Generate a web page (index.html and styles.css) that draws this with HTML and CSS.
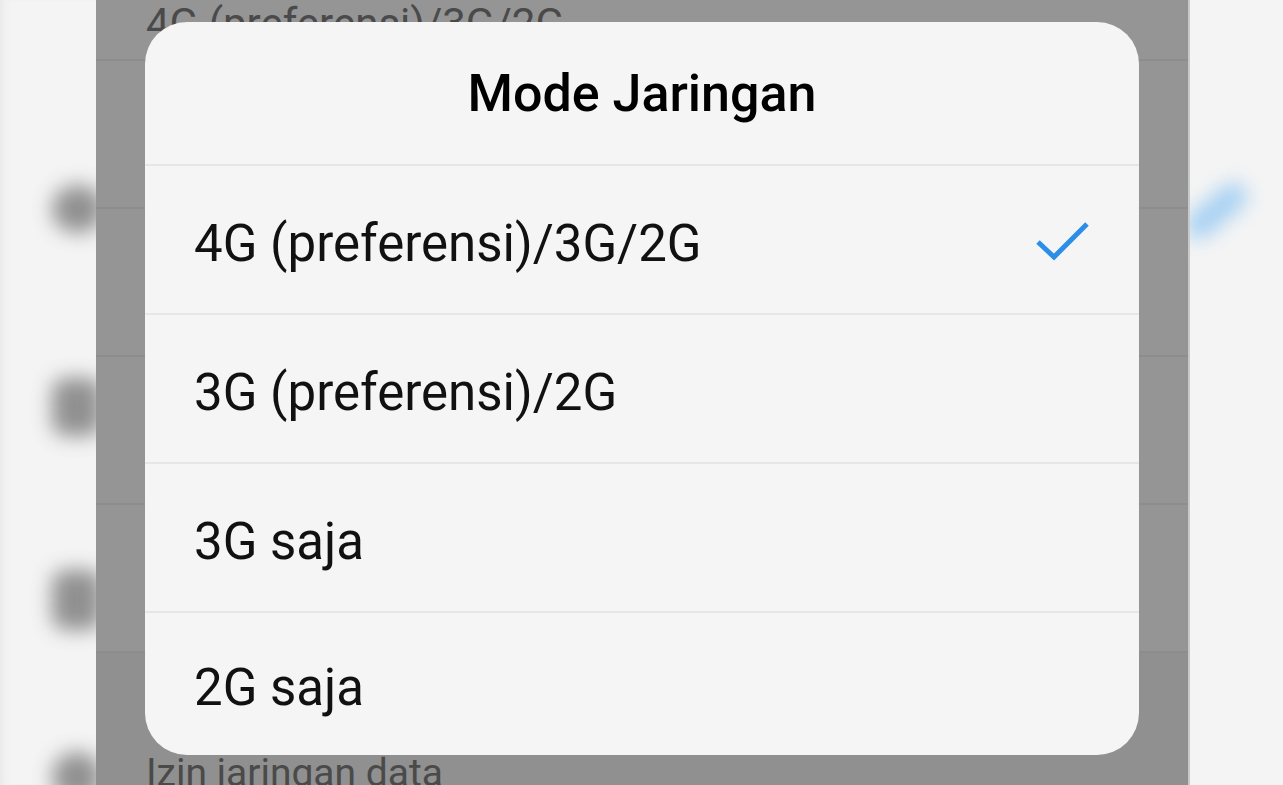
FILE: index.html
```html
<!DOCTYPE html>
<html lang="id">
<head>
<meta charset="utf-8">
<title>Mode Jaringan</title>
<link rel="stylesheet" href="styles.css">
</head>
<body>
<div class="screen">
  <div class="side side-left">
    <span class="blob blob-1"></span>
    <span class="blob blob-2"></span>
    <span class="blob blob-3"></span>
    <span class="blob blob-4"></span>
  </div>
  <div class="middle">
    <div class="bg-row bg-row-top"><span class="bg-text">4G (preferensi)/3G/2G</span></div>
    <div class="bg-row"></div>
    <div class="bg-row"></div>
    <div class="bg-row"></div>
    <div class="bg-row"></div>
    <div class="bg-row bg-row-last"><span class="bg-text bg-text-bottom">Izin jaringan data</span></div>
  </div>
  <div class="side side-right">
    <span class="pencil"></span>
  </div>

  <div class="dialog">
    <div class="dialog-title">Mode Jaringan</div>
    <div class="option">
      <span class="option-label">4G (preferensi)/3G/2G</span>
      <svg class="check" width="56" height="42" viewBox="0 0 56 42"><path d="M4 23 L20 38 L53 5" fill="none" stroke="#2b8fe9" stroke-width="5"/></svg>
    </div>
    <div class="option"><span class="option-label">3G (preferensi)/2G</span></div>
    <div class="option"><span class="option-label">3G saja</span></div>
    <div class="option option-last"><span class="option-label">2G saja</span></div>
  </div>
</div>
</body>
</html>
```
FILE: styles.css
```css
html, body {
  margin: 0;
  padding: 0;
  background: #f5f5f5;
  font-family: Roboto, "Liberation Sans", sans-serif;
}

.screen {
  position: relative;
  width: 1283px;
  height: 785px;
  display: flex;
  overflow: hidden;
}

.side {
  position: relative;
  background: #f4f4f4;
  overflow: hidden;
}

.side-left {
  width: 96px;
  box-shadow: inset 8px 0 10px -6px #e6e6e6;
}

.side-right {
  width: 95px;
  border-left: 2px solid #c9c9c9;
  box-sizing: border-box;
}

.blob {
  position: absolute;
  background: #7f7f7f;
  border-radius: 14px;
  filter: blur(10px);
  opacity: 0.85;
}
.blob-1 { left: 52px; top: 185px; width: 52px; height: 48px; border-radius: 50%; }
.blob-2 { left: 52px; top: 378px; width: 50px; height: 58px; }
.blob-3 { left: 52px; top: 570px; width: 50px; height: 60px; }
.blob-4 { left: 52px; top: 752px; width: 50px; height: 50px; border-radius: 50%; }

.pencil {
  position: absolute;
  left: -10px;
  top: 198px;
  width: 72px;
  height: 26px;
  background: #a3cff3;
  border-radius: 14px;
  transform: rotate(-40deg);
  filter: blur(10px);
}

.middle {
  width: 1092px;
  background: #959595;
  display: flex;
  flex-direction: column;
}

.bg-row {
  height: 148px;
  flex: none;
  border-bottom: 2px solid #8d8d8d;
  box-sizing: border-box;
  position: relative;
}

.bg-row-top {
  height: 61px;
}

.bg-row-last {
  flex: 1;
  border-bottom: 0;
  background: #909090;
}

.bg-text {
  position: absolute;
  left: 50px;
  top: -1px;
  font-size: 42px;
  color: #4a4a4a;
  white-space: nowrap;
}

.bg-text-bottom {
  top: 97px;
  font-size: 39px;
}

.dialog {
  position: absolute;
  left: 145px;
  top: 22px;
  width: 994px;
  height: 733px;
  background: #f5f5f5;
  border-radius: 42px;
  display: flex;
  flex-direction: column;
  overflow: hidden;
}

.dialog-title {
  height: 144px;
  flex: none;
  display: flex;
  align-items: center;
  justify-content: center;
  font-size: 52px;
  font-weight: 500;
  color: #000;
  border-bottom: 2px solid #e6e6e6;
  box-sizing: border-box;
}

.option {
  height: 149px;
  flex: none;
  display: flex;
  align-items: center;
  justify-content: space-between;
  padding: 8px 49px 0 49px;
  border-bottom: 2px solid #e6e6e6;
  box-sizing: border-box;
}

.option-last {
  flex: 1;
  border-bottom: 0;
  padding-top: 6px;
}

.option-label {
  font-size: 51px;
  color: #111;
}

.check {
  display: block;
  margin-top: -8px;
}
```
